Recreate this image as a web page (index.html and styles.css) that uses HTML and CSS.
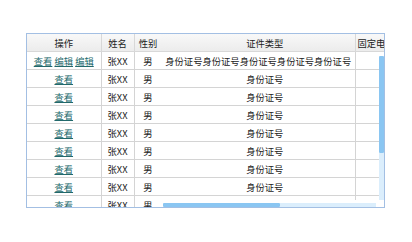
FILE: index.html
```html
<!DOCTYPE html>
<html lang="zh-CN">
<head>
<meta charset="utf-8">
<link rel="stylesheet" href="styles.css">
</head>
<body>
<div class="grid">
  <div class="frozen">
    <table class="head">
      <colgroup><col class="c-op"><col class="c-name"><col class="c-sex"></colgroup>
      <tr><th>操作</th><th>姓名</th><th>性别</th></tr>
    </table>
    <div class="fbody">
      <table class="body">
        <colgroup><col class="c-op"><col class="c-name"><col class="c-sex"></colgroup>
        <tr><td><a href="#">查看</a> <a href="#">编辑</a> <a href="#">编辑</a></td><td>张XX</td><td>男</td></tr>
        <tr><td><a href="#">查看</a></td><td>张XX</td><td>男</td></tr>
        <tr><td><a href="#">查看</a></td><td>张XX</td><td>男</td></tr>
        <tr><td><a href="#">查看</a></td><td>张XX</td><td>男</td></tr>
        <tr><td><a href="#">查看</a></td><td>张XX</td><td>男</td></tr>
        <tr><td><a href="#">查看</a></td><td>张XX</td><td>男</td></tr>
        <tr><td><a href="#">查看</a></td><td>张XX</td><td>男</td></tr>
        <tr><td><a href="#">查看</a></td><td>张XX</td><td>男</td></tr>
        <tr><td><a href="#">查看</a></td><td>张XX</td><td>男</td></tr>
        <tr><td><a href="#">查看</a></td><td>张XX</td><td>男</td></tr>
      </table>
    </div>
  </div>
  <div class="main">
    <div class="mhead">
      <table class="head wide">
        <colgroup><col class="c-id"><col class="c-tel"><col class="c-mob"></colgroup>
        <tr><th class="id">证件类型</th><th class="left">固定电话</th><th>手机号码</th></tr>
      </table>
    </div>
    <div class="mbody">
      <div class="mview">
        <table class="body wide">
          <colgroup><col class="c-id"><col class="c-tel"><col class="c-mob"></colgroup>
          <tr><td class="long">身份证号身份证号身份证号身份证号身份证号</td><td></td><td></td></tr>
          <tr><td class="id">身份证号</td><td></td><td></td></tr>
          <tr><td class="id">身份证号</td><td></td><td></td></tr>
          <tr><td class="id">身份证号</td><td></td><td></td></tr>
          <tr><td class="id">身份证号</td><td></td><td></td></tr>
          <tr><td class="id">身份证号</td><td></td><td></td></tr>
          <tr><td class="id">身份证号</td><td></td><td></td></tr>
          <tr><td class="id">身份证号</td><td></td><td></td></tr>
          <tr><td class="id">身份证号</td><td></td><td></td></tr>
          <tr><td class="id">身份证号</td><td></td><td></td></tr>
        </table>
      </div>
      <div class="vbar"><div class="vthumb"></div><div class="vrest"></div></div>
      <div class="hbar"><div class="hthumb"></div><div class="hrest"></div></div>
      <div class="corner"></div>
    </div>
  </div>
</div>
</body>
</html>
```
FILE: styles.css
```css
html, body {
  margin: 0;
  background: #ffffff;
}
body {
  padding: 33px 0 0 26px;
  font-family: "Noto Sans CJK SC", "Noto Sans", sans-serif;
  font-size: 9.3px;
  color: #222222;
}
.grid {
  width: 357px;
  height: 173px;
  border: 1px solid #a3bfe3;
  display: flex;
  overflow: hidden;
}
table {
  border-collapse: collapse;
  table-layout: fixed;
}
col.c-op { width: 74px; }
col.c-name { width: 33px; }
col.c-sex { width: 28px; }
col.c-id { width: 193px; }
col.c-tel { width: 104px; }
col.c-mob { width: 104px; }
.frozen {
  width: 135px;
  flex: none;
  display: flex;
  flex-direction: column;
  overflow: hidden;
}
.frozen table { width: 135px; }
.main {
  flex: 1;
  min-width: 0;
  display: flex;
  flex-direction: column;
  overflow: hidden;
}
.wide { width: 401px; }
.mhead { overflow: hidden; flex: none; }
.fbody { flex: 1; overflow: hidden; }
.mbody {
  flex: 1;
  min-height: 0;
  display: grid;
  grid-template-columns: 1fr 5px;
  grid-template-rows: 1fr 7px;
}
.mview {
  overflow: hidden;
  min-width: 0;
  min-height: 0;
}
.vbar {
  display: flex;
  flex-direction: column;
  padding-top: 4px;
  background: #ffffff;
}
.vthumb {
  height: 97px;
  flex: none;
  background: #8ac6f2;
  border-radius: 1px;
}
.vrest {
  flex: 1;
  background: #dbeefc;
}
.hbar {
  display: flex;
  padding: 3px 3px 0 1px;
  background: #ffffff;
}
.hthumb {
  width: 117px;
  flex: none;
  background: #8ac6f2;
  border-radius: 1px;
}
.hrest {
  flex: 1;
  background: #dbeefc;
}
.corner { background: #ffffff; }
th {
  height: 17px;
  padding: 0 2px;
  font-weight: normal;
  color: #222222;
  background: linear-gradient(#f8f8f8, #ececec);
  border-right: 1px solid #d8d8d8;
  border-bottom: 1px solid #d8d8d8;
  text-align: center;
  white-space: nowrap;
  overflow: hidden;
}
th.left { text-align: left; }
th.id, td.id { padding-left: 15px; }
td {
  height: 17px;
  padding: 0 2px;
  border-right: 1px solid #d4d4d4;
  border-bottom: 1px solid #d4d4d4;
  text-align: center;
  white-space: nowrap;
  overflow: hidden;
  color: #222222;
}
a {
  color: #22696b;
  text-decoration: underline;
}
```
